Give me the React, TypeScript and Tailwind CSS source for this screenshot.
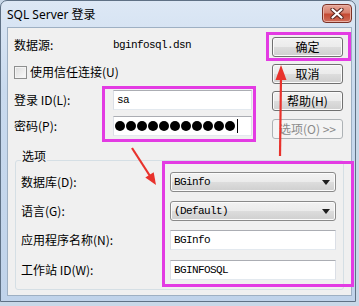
import React from "react";

const btn =
  "flex h-[20px] w-[71px] items-center justify-center rounded-[3px] border border-[#707070] bg-[linear-gradient(#f2f2f2_0%,#ebebeb_50%,#dddddd_50%,#cfcfcf_100%)] shadow-[inset_0_0_0_1px_#fbfbfb] text-[12px] leading-none";

const mono = "font-[family-name:'Liberation_Mono',monospace] text-[11px] tracking-[-0.6px]";

function Select({ value }: { value: string }) {
  return (
    <div className="relative flex h-[20px] w-[166px] items-center rounded-[3px] border border-[#8a8a8a] bg-[linear-gradient(#f2f2f2_0%,#ebebeb_50%,#dddddd_50%,#cfcfcf_100%)] shadow-[inset_0_0_0_1px_#fbfbfb] pl-[3px]">
      <span className={mono}>{value}</span>
      <svg className="ml-auto mr-[5px]" width="8" height="5" viewBox="0 0 8 5">
        <path d="M0 0 H8 L4 5 Z" fill="#1e1e1e" />
      </svg>
    </div>
  );
}

function TextInput({ value, w }: { value: string; w: string }) {
  return (
    <div
      className={`flex h-[20px] ${w} items-center border border-[#abadb3] border-x-[#dbdfe6] border-b-[#e3e9ef] bg-white pl-[3px]`}
    >
      <span className={mono}>{value}</span>
    </div>
  );
}

function CloseBtn() {
  return (
    <div className="mt-[3px] flex h-[19px] w-[30px] items-center justify-center self-start rounded-[4px] border border-[#7b3227] bg-[linear-gradient(#e6a698_0%,#d7806e_45%,#c54a33_55%,#cf6f5b_100%)] shadow-[inset_0_0_0_1px_#eab2a6]">
      <svg width="14" height="11" viewBox="0 0 14 11">
        <path d="M2.5 1.5 L11.5 9.5 M11.5 1.5 L2.5 9.5" stroke="#5a2620" strokeWidth="4.2" strokeLinecap="round" />
        <path d="M2.5 1.5 L11.5 9.5 M11.5 1.5 L2.5 9.5" stroke="#ffffff" strokeWidth="2.2" strokeLinecap="round" />
      </svg>
    </div>
  );
}

export default function App() {
  return (
    <div className="relative h-[306px] w-[359px] overflow-hidden bg-[#c9d8e8] font-[family-name:'Noto_Sans_CJK_SC',sans-serif] text-[12px] text-black">
      <div className="flex h-[302px] w-[356px] flex-col rounded-t-[7px] border border-[#5f7185] bg-[linear-gradient(#dde8f5_0%,#c9daee_30%,#c0d3ea_100%)] pb-[5px] pl-[6px] pr-[3px]">
        {/* Title bar */}
        <div className="flex h-[26px] shrink-0 items-center justify-between">
          <span className="pt-[1px] font-[family-name:'Noto_Sans','Noto_Sans_CJK_SC',sans-serif] text-[12px] leading-none">
            SQL Server 登录
          </span>
          <CloseBtn />
        </div>

        {/* Client area */}
        <div className="flex flex-1 flex-col border border-[#9eb0c3] bg-[#f0f0f0]">
          {/* Top section */}
          <div className="flex h-[111px] shrink-0 pl-[6px]">
            <div className="flex w-[258px] flex-col">
              <div className="mt-[7px] flex h-[20px] items-center">
                <span className="w-[99px] leading-none">数据源:</span>
                <span className={mono}>bginfosql.dsn</span>
              </div>
              <div className="mt-[7px] flex h-[20px] items-center">
                <div className="h-[13px] w-[13px] border border-[#8e8f8f] bg-[linear-gradient(135deg,#dcdcdc,#fbfbfb)] shadow-[inset_0_0_0_1px_#f4f4f4]" />
                <span className="ml-[3px] leading-none">使用信任连接(U)</span>
              </div>
              <div className="mt-[8px] flex h-[20px] items-center">
                <span className="w-[99px] leading-none">登录 ID(L):</span>
                <TextInput value="sa" w="w-[139px]" />
              </div>
              <div className="mt-[6px] flex h-[20px] items-center">
                <span className="w-[99px] leading-none">密码(P):</span>
                <div className="flex h-[20px] w-[139px] items-center gap-[1px] border border-[#abadb3] border-x-[#dbdfe6] border-b-[#e3e9ef] bg-white pl-[1px]">
                  {Array.from({ length: 11 }).map((_, i) => (
                    <div key={i} className="h-[10px] w-[10px] rounded-full bg-black" />
                  ))}
                  <div className="ml-[1px] h-[14px] w-[1px] bg-black" />
                </div>
              </div>
            </div>
            <div className="flex w-[71px] flex-col pt-[9px]">
              <div className={`${btn} border-[#3c7fb1] shadow-[inset_0_0_0_1px_#9fdcf6,inset_0_0_0_2px_#dcf2fb]`}>确定</div>
              <div className={`${btn} mt-[7px]`}>取消</div>
              <div className={`${btn} mt-[7px]`}>帮助(H)</div>
              <div className="mt-[8px] flex h-[20px] w-[71px] items-center justify-center rounded-[3px] border border-[#adb2b5] bg-[#f4f4f4] leading-none text-[#8a8a8a]">
                选项(O)&nbsp;&gt;&gt;
              </div>
            </div>
          </div>

          {/* Options group */}
          <fieldset className="ml-[7px] mt-[11px] w-[329px] rounded-[3px] border border-[#d5dfe5] pb-[9px] pl-[5px] pt-[2px]">
            <legend className="px-[1px] pb-[8px] leading-[12px]">选项</legend>
            <div className="flex h-[20px] items-center">
              <span className="w-[149px] leading-none">数据库(D):</span>
              <Select value="BGinfo" />
            </div>
            <div className="mt-[9px] flex h-[20px] items-center">
              <span className="w-[149px] leading-none">语言(G):</span>
              <Select value="(Default)" />
            </div>
            <div className="mt-[9px] flex h-[20px] items-center">
              <span className="w-[149px] leading-none">应用程序名称(N):</span>
              <TextInput value="BGInfo" w="w-[166px]" />
            </div>
            <div className="mt-[10px] flex h-[20px] items-center">
              <span className="w-[149px] leading-none">工作站 ID(W):</span>
              <TextInput value="BGINFOSQL" w="w-[166px]" />
            </div>
          </fieldset>
        </div>
      </div>

      {/* Annotation overlays */}
      <div className="pointer-events-none absolute left-[266px] top-[32px] h-[29px] w-[85px] border-[3px] border-[#e33be3]" />
      <div className="pointer-events-none absolute left-[102px] top-[86px] h-[56px] w-[154px] border-[3px] border-[#e33be3]" />
      <div className="pointer-events-none absolute left-[162px] top-[161px] h-[126px] w-[192px] border-[3px] border-[#e33be3]" />
      <svg className="pointer-events-none absolute left-0 top-0" width="359" height="306" viewBox="0 0 359 306">
        <line x1="132" y1="148" x2="150" y2="176" stroke="#e8322c" strokeWidth="2.2" />
        <polygon points="156,185 153.7,172.2 145.3,177.6" fill="#e8322c" />
        <line x1="280" y1="156" x2="281" y2="76" stroke="#e8322c" strokeWidth="2.2" />
        <polygon points="281,65 275.5,80 286.5,80" fill="#e8322c" />
      </svg>
    </div>
  );
}
